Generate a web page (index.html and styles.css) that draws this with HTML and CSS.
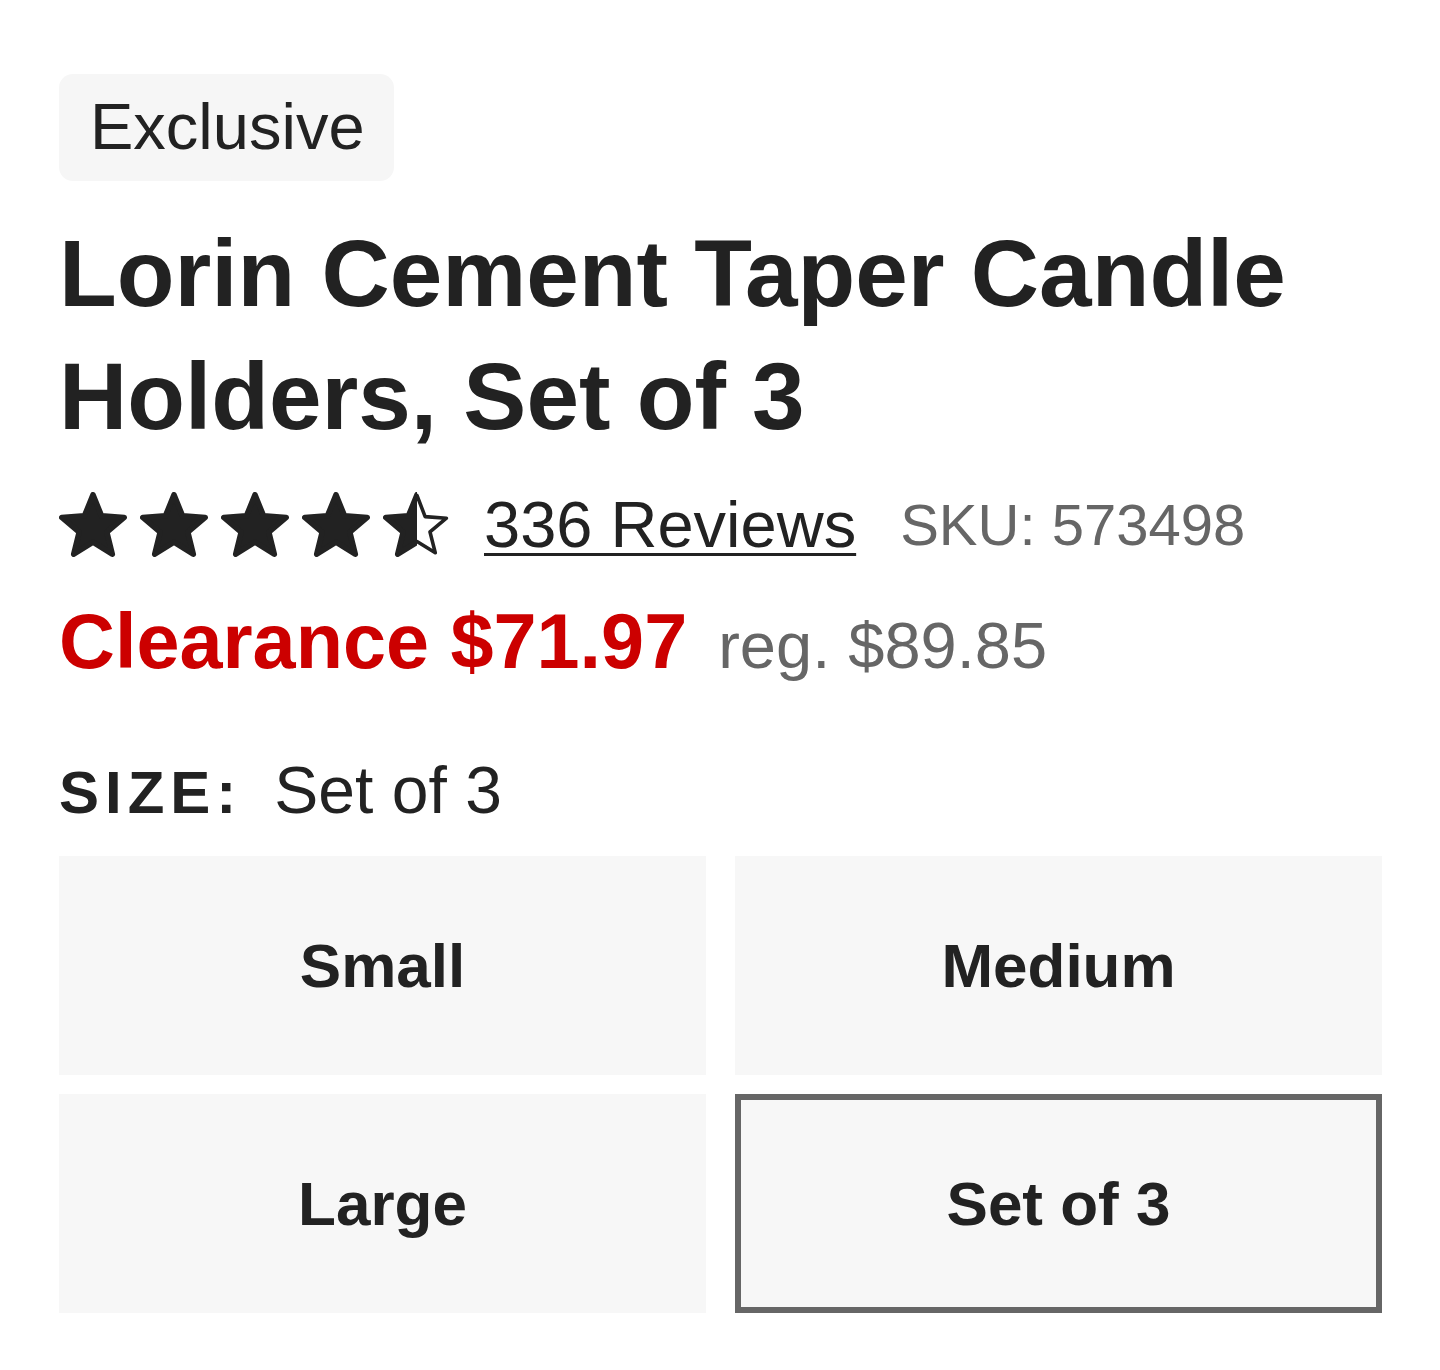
FILE: index.html
```html
<!DOCTYPE html>
<html lang="en">
<head>
<meta charset="utf-8">
<title>Lorin Cement Taper Candle Holders, Set of 3</title>
<link rel="stylesheet" href="styles.css">
</head>
<body>
<main class="page">
  <div class="badge">Exclusive</div>
  <h1 class="title">Lorin Cement Taper Candle Holders, Set of 3</h1>
  <div class="rating-row">
    <div class="stars" aria-label="4.5 out of 5 stars">
      <svg class="star" viewBox="1.02 0.8 21.96 20.98"><polygon class="star-full" points="12,1.7 14.76,8.5 22.08,9.02 16.47,13.75 18.23,20.88 12,17 5.77,20.88 7.53,13.75 1.92,9.02 9.24,8.5"/></svg>
      <svg class="star" viewBox="1.02 0.8 21.96 20.98"><polygon class="star-full" points="12,1.7 14.76,8.5 22.08,9.02 16.47,13.75 18.23,20.88 12,17 5.77,20.88 7.53,13.75 1.92,9.02 9.24,8.5"/></svg>
      <svg class="star" viewBox="1.02 0.8 21.96 20.98"><polygon class="star-full" points="12,1.7 14.76,8.5 22.08,9.02 16.47,13.75 18.23,20.88 12,17 5.77,20.88 7.53,13.75 1.92,9.02 9.24,8.5"/></svg>
      <svg class="star" viewBox="1.02 0.8 21.96 20.98"><polygon class="star-full" points="12,1.7 14.76,8.5 22.08,9.02 16.47,13.75 18.23,20.88 12,17 5.77,20.88 7.53,13.75 1.92,9.02 9.24,8.5"/></svg>
      <svg class="star" viewBox="1.02 0.8 21.96 20.98">
        <defs><clipPath id="halfclip"><rect x="0" y="0" width="12" height="24"/></clipPath></defs>
        <polygon class="star-outline" points="12,1.9 14.62,8.75 21.5,9.25 16.2,13.7 17.9,20.4 12,16.8 6.1,20.4 7.8,13.7 2.5,9.25 9.38,8.75"/>
        <polygon class="star-full" clip-path="url(#halfclip)" points="12,1.7 14.76,8.5 22.08,9.02 16.47,13.75 18.23,20.88 12,17 5.77,20.88 7.53,13.75 1.92,9.02 9.24,8.5"/>
      </svg>
    </div>
    <a class="reviews" href="#">336 Reviews</a>
    <span class="sku">SKU: 573498</span>
  </div>
  <div class="price-row">
    <span class="price">Clearance $71.97</span>
    <span class="reg">reg. $89.85</span>
  </div>
  <div class="size-row">
    <span class="size-label">SIZE:</span>
    <span class="size-value">Set of 3</span>
  </div>
  <div class="options">
    <button class="option">Small</button>
    <button class="option">Medium</button>
    <button class="option">Large</button>
    <button class="option selected">Set of 3</button>
  </div>
</main>
</body>
</html>
```

FILE: styles.css
```css
* { box-sizing: border-box; }

html, body {
  margin: 0;
  padding: 0;
  background: #ffffff;
}

body {
  font-family: "Liberation Sans", Arial, Helvetica, sans-serif;
  color: #222222;
}

.page {
  width: 1440px;
  padding: 74px 58px 0 59px;
}

.badge {
  display: inline-block;
  background: #f6f6f6;
  border-radius: 14px;
  font-size: 65px;
  line-height: 64px;
  padding: 21px 29px 22px 31px;
  color: #222222;
}

.title {
  margin: 31px 0 0 0;
  font-size: 94.5px;
  line-height: 123px;
  font-weight: 700;
  color: #222222;
}

.rating-row {
  display: flex;
  align-items: center;
  margin-top: 34px;
  height: 65px;
}

.stars {
  display: flex;
  gap: 13px;
}

.star {
  width: 68px;
  height: 65px;
  display: block;
}

.star-full {
  fill: #222222;
  stroke: #222222;
  stroke-width: 1.8;
  stroke-linejoin: round;
}

.star-outline {
  fill: #ffffff;
  stroke: #222222;
  stroke-width: 1.15;
  stroke-linejoin: round;
}

.reviews {
  margin-left: 33px;
  font-size: 65px;
  line-height: 64px;
  color: #222222;
  text-decoration: underline;
  text-decoration-thickness: 3px;
  text-underline-offset: 6px;
}

.sku {
  margin-left: 44px;
  font-size: 58px;
  line-height: 64px;
  color: #666666;
}

.price-row {
  display: flex;
  align-items: baseline;
  margin-top: 44px;
  height: 80px;
}

.price {
  font-size: 77.4px;
  line-height: 80px;
  font-weight: 700;
  color: #cc0000;
}

.reg {
  margin-left: 31px;
  font-size: 65px;
  line-height: 64px;
  color: #666666;
}

.size-row {
  display: flex;
  align-items: baseline;
  margin-top: 77px;
  height: 64px;
}

.size-label {
  font-size: 60px;
  line-height: 64px;
  font-weight: 700;
  letter-spacing: 6px;
  color: #222222;
}

.size-value {
  margin-left: 32px;
  font-size: 66px;
  line-height: 64px;
  color: #222222;
}

.options {
  display: grid;
  grid-template-columns: 1fr 1fr;
  column-gap: 29px;
  row-gap: 19px;
  margin-top: 34px;
}

.option {
  height: 219px;
  border: none;
  background: #f7f7f7;
  font-family: "Liberation Sans", Arial, Helvetica, sans-serif;
  font-size: 62px;
  font-weight: 700;
  color: #222222;
  padding: 0;
  cursor: pointer;
}

.option.selected {
  border: 6px solid #666666;
}
```
